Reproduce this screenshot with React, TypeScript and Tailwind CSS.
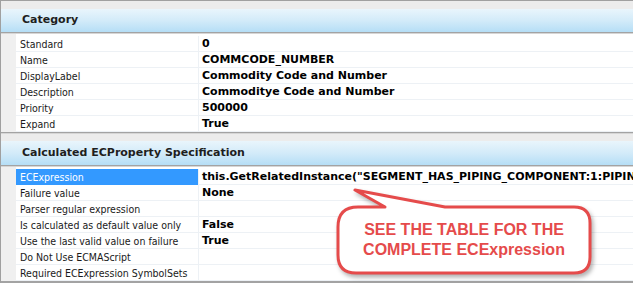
import clsx from 'clsx';

type Row = { label: string; value?: string; selected?: boolean };

const CATEGORY_ROWS: Row[] = [
  { label: 'Standard', value: '0' },
  { label: 'Name', value: 'COMMCODE_NUMBER' },
  { label: 'DisplayLabel', value: 'Commodity Code and Number' },
  { label: 'Description', value: 'Commoditye Code and Number' },
  { label: 'Priority', value: '500000' },
  { label: 'Expand', value: 'True' },
];

const CALCULATED_ROWS: Row[] = [
  {
    label: 'ECExpression',
    value: 'this.GetRelatedInstance("SEGMENT_HAS_PIPING_COMPONENT:1:PIPING_',
    selected: true,
  },
  { label: 'Failure value', value: 'None' },
  { label: 'Parser regular expression' },
  { label: 'Is calculated as default value only', value: 'False' },
  { label: 'Use the last valid value on failure', value: 'True' },
  { label: 'Do Not Use ECMAScript' },
  { label: 'Required ECExpression SymbolSets' },
];

const GridRow = ({ row }: { row: Row }) => (
  <div className="flex h-[16px] shrink-0">
    <div className="w-[15px] shrink-0 bg-[#f0f0f0]" />
    <div
      className={clsx(
        'w-[182px] shrink-0 truncate border-b pl-[4px] text-[10.5px] leading-[16px]',
        row.selected
          ? 'border-[#3399ff] bg-[#3399ff] text-white'
          : 'border-[#edf1f5] text-[#1a1a1a]'
      )}
    >
      {row.label}
    </div>
    <div className="w-px shrink-0 bg-[#edf1f5]" />
    <div className="min-w-0 flex-1 overflow-hidden whitespace-nowrap border-b border-[#edf1f5] pl-[3px] font-['DejaVu_Sans',sans-serif] text-[11px] font-bold leading-[16px] text-black">
      {row.value}
    </div>
  </div>
);

const Section = ({
  title,
  rows,
  gapClass,
  headerClass,
}: {
  title: string;
  rows: Row[];
  gapClass: string;
  headerClass: string;
}) => (
  <div className="flex flex-col">
    <div className={clsx('bg-[#ececec]', gapClass)} />
    <div
      className={clsx(
        'flex items-center bg-gradient-to-b from-[#e9f5fc] via-[#d3ebf9] to-[#b5def6] pl-[21px]',
        "font-['DejaVu_Sans',sans-serif] text-[11px] font-bold text-[#1e1e1e]",
        headerClass
      )}
    >
      {title}
    </div>
    <div className="h-px bg-[#a3a3a3]" />
    <div className="h-px bg-[#d6d6d6]" />
    <div className="flex h-[2px]">
      <div className="w-[15px] bg-[#f0f0f0]" />
      <div className="flex-1 bg-white" />
    </div>
    {rows.map((row) => (
      <GridRow key={row.label} row={row} />
    ))}
  </div>
);

const Callout = () => (
  <div className="absolute left-[330px] top-[183px] h-[100px] w-[270px]">
    <svg
      width="270"
      height="100"
      viewBox="0 0 270 100"
      className="absolute inset-0 drop-shadow-[2px_3px_2px_rgba(0,0,0,0.3)]"
    >
      <path
        d="M55 23 L25 6 L115 23 H244 Q260 23 260 39 V73 Q260 89 244 89 H26 Q8 89 8 71 V43 Q8 23 28 23 Z"
        fill="#ffffff"
        stroke="#e54b4b"
        strokeWidth="3"
        strokeLinejoin="round"
      />
    </svg>
    <div className="absolute left-[8px] top-[23px] flex h-[66px] w-[252px] flex-col items-center justify-center font-['Liberation_Sans',Arial,sans-serif] text-[16px] font-bold leading-[20px] text-[#e54b4b]">
      <span>SEE THE TABLE FOR THE</span>
      <span>COMPLETE ECExpression</span>
    </div>
  </div>
);

export default function App() {
  return (
    <div className="relative h-[283px] w-[633px] overflow-hidden border-t border-[#a0a0a0] bg-white font-['DejaVu_Sans_Condensed','DejaVu_Sans',sans-serif]">
      <div className="flex h-full flex-col border-l border-[#a0a0a0]">
        <Section
          title="Category"
          rows={CATEGORY_ROWS}
          gapClass="h-[8px]"
          headerClass="h-[23px]"
        />
        <div className="h-px bg-[#a3a3a3]" />
        <div className="h-px bg-[#d6d6d6]" />
        <Section
          title="Calculated ECProperty Specification"
          rows={CALCULATED_ROWS}
          gapClass="h-[7px]"
          headerClass="h-[24px]"
        />
        <div className="h-[2px] bg-[#a3a3a3]" />
      </div>
      <Callout />
    </div>
  );
}
